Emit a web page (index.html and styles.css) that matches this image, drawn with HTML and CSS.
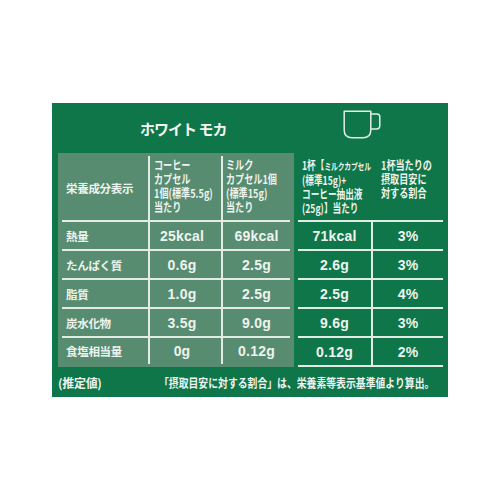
FILE: index.html
```
<!DOCTYPE html>
<html lang="ja">
<head>
<meta charset="utf-8">
<link rel="stylesheet" href="styles.css">
</head>
<body>
<div class="panel">
  <div class="head">
    <div class="title">ホワイト モカ</div>
    <svg class="cup" width="38" height="29" viewBox="0 0 38 29">
      <path d="M1.2 1.2 H27.8 V20 Q27.8 27.8 20 27.8 H9 Q1.2 27.8 1.2 20 Z" />
      <path d="M27.8 4 H34 Q36.8 4 36.8 7 V15.5 Q36.8 19 33.5 19 H27.8" />
    </svg>
  </div>
  <div class="tables">
    <div class="lt">
      <div class="c lbl">栄養成分表示</div>
      <div class="c hd vl p2"><div class="ht">コーヒー<br>カプセル<br>1個(標準5.5g)<br>当たり</div></div>
      <div class="c hd vl p3"><div class="ht">ミルク<br>カプセル1個<br>(標準15g)<br>当たり</div></div>

      <div class="c lbl">熱量</div>
      <div class="c v vl c2">25kcal</div>
      <div class="c v vl">69kcal</div>

      <div class="c lbl">たんぱく質</div>
      <div class="c v vl c2">0.6g</div>
      <div class="c v vl">2.5g</div>

      <div class="c lbl">脂質</div>
      <div class="c v vl c2">1.0g</div>
      <div class="c v vl">2.5g</div>

      <div class="c lbl">炭水化物</div>
      <div class="c v vl c2">3.5g</div>
      <div class="c v vl">9.0g</div>

      <div class="c lbl last">食塩相当量</div>
      <div class="c v vl c2 last">0g</div>
      <div class="c v vl last">0.12g</div>
    </div>
    <div class="rt">
      <div class="c hd p4"><div class="ht">1杯【<span class="sm">ミルクカプセル</span><br>(標準15g)+<br>コーヒー抽出液<br>(25g)】当たり</div></div>
      <div class="c hd p5"><div class="ht">1杯当たりの<br>摂取目安に<br>対する割合</div></div>

      <div class="c v">71kcal</div>
      <div class="c v vl">3%</div>

      <div class="c v">2.6g</div>
      <div class="c v vl">3%</div>

      <div class="c v">2.5g</div>
      <div class="c v vl">4%</div>

      <div class="c v">9.6g</div>
      <div class="c v vl">3%</div>

      <div class="c v">0.12g</div>
      <div class="c v vl">2%</div>
    </div>
  </div>
  <div class="foot">
    <span class="f1">(推定値)</span>
    <span class="f2">「摂取目安に対する割合」は、栄養素等表示基準値より算出。</span>
  </div>
</div>
</body>
</html>
```
FILE: styles.css
```
html, body {
  margin: 0;
  padding: 0;
  background: #ffffff;
}
body {
  font-family: "Noto Sans CJK JP", "Noto Sans", sans-serif;
  color: #eef3ef;
}
.panel {
  box-sizing: border-box;
  width: 396px;
  height: 294px;
  margin: 103px 0 0 52px;
  padding: 0 5px 0 6px;
  background: #0e7648;
  display: flex;
  flex-direction: column;
}
.head {
  height: 50px;
  display: flex;
  align-items: center;
}
.title {
  padding-left: 82px;
  font-size: 15px;
  font-weight: 700;
  letter-spacing: -1px;
  line-height: 1;
  color: #f3f7f4;
}
.cup {
  margin-left: auto;
  margin-right: 62px;
  align-self: flex-start;
  margin-top: 7px;
  display: block;
}
.cup path {
  fill: none;
  stroke: #e4ece6;
  stroke-width: 1.5;
  stroke-linejoin: round;
}
.tables {
  display: flex;
  gap: 4px;
  height: 214px;
}
.lt {
  box-sizing: border-box;
  width: 236px;
  background: #578c70;
  padding: 3px 4px;
  display: grid;
  grid-template-columns: 86px 73px 69px;
  grid-template-rows: 66px 29px 29px 29px 29px 26px;
}
.rt {
  box-sizing: border-box;
  width: 145px;
  margin-top: 3px;
  display: grid;
  grid-template-columns: 73px 72px;
  grid-template-rows: 66px 29px 29px 29px 29px 29px;
}
.c {
  box-sizing: border-box;
  border-bottom: 2px solid #e3ebe5;
  display: flex;
  align-items: center;
  font-weight: 700;
}
.c.last {
  border-bottom: none;
}
.vl {
  border-left: 2px solid #e3ebe5;
}
.lbl {
  padding-left: 4px;
  font-size: 11.5px;
  letter-spacing: -0.3px;
}
.hd {
  align-items: flex-start;
  padding-top: 2px;
}
.p2 { padding-left: 4px; }
.p3 { padding-left: 3px; }
.p4 { padding-left: 4px; }
.p5 { padding-left: 10px; }
.ht {
  font-size: 12px;
  line-height: 14px;
  white-space: nowrap;
  transform: scaleX(0.76);
  transform-origin: 0 0;
}
.p4 .ht {
  transform: scaleX(0.72);
}
.sm {
  font-size: 9.5px;
  letter-spacing: -0.3px;
}
.v {
  justify-content: center;
  font-family: "Liberation Sans", "Noto Sans CJK JP", sans-serif;
  font-size: 14px;
  letter-spacing: 0.2px;
}
.v.c2 {
  padding-right: 7px;
}
.foot {
  height: 30px;
  display: grid;
  grid-template-columns: 101px auto;
  align-items: center;
  font-size: 12px;
  font-weight: 700;
  white-space: nowrap;
}
.f1 {
  letter-spacing: -0.3px;
}
.f2 {
  display: inline-block;
  transform: scaleX(0.82);
  transform-origin: 0 50%;
}
```
